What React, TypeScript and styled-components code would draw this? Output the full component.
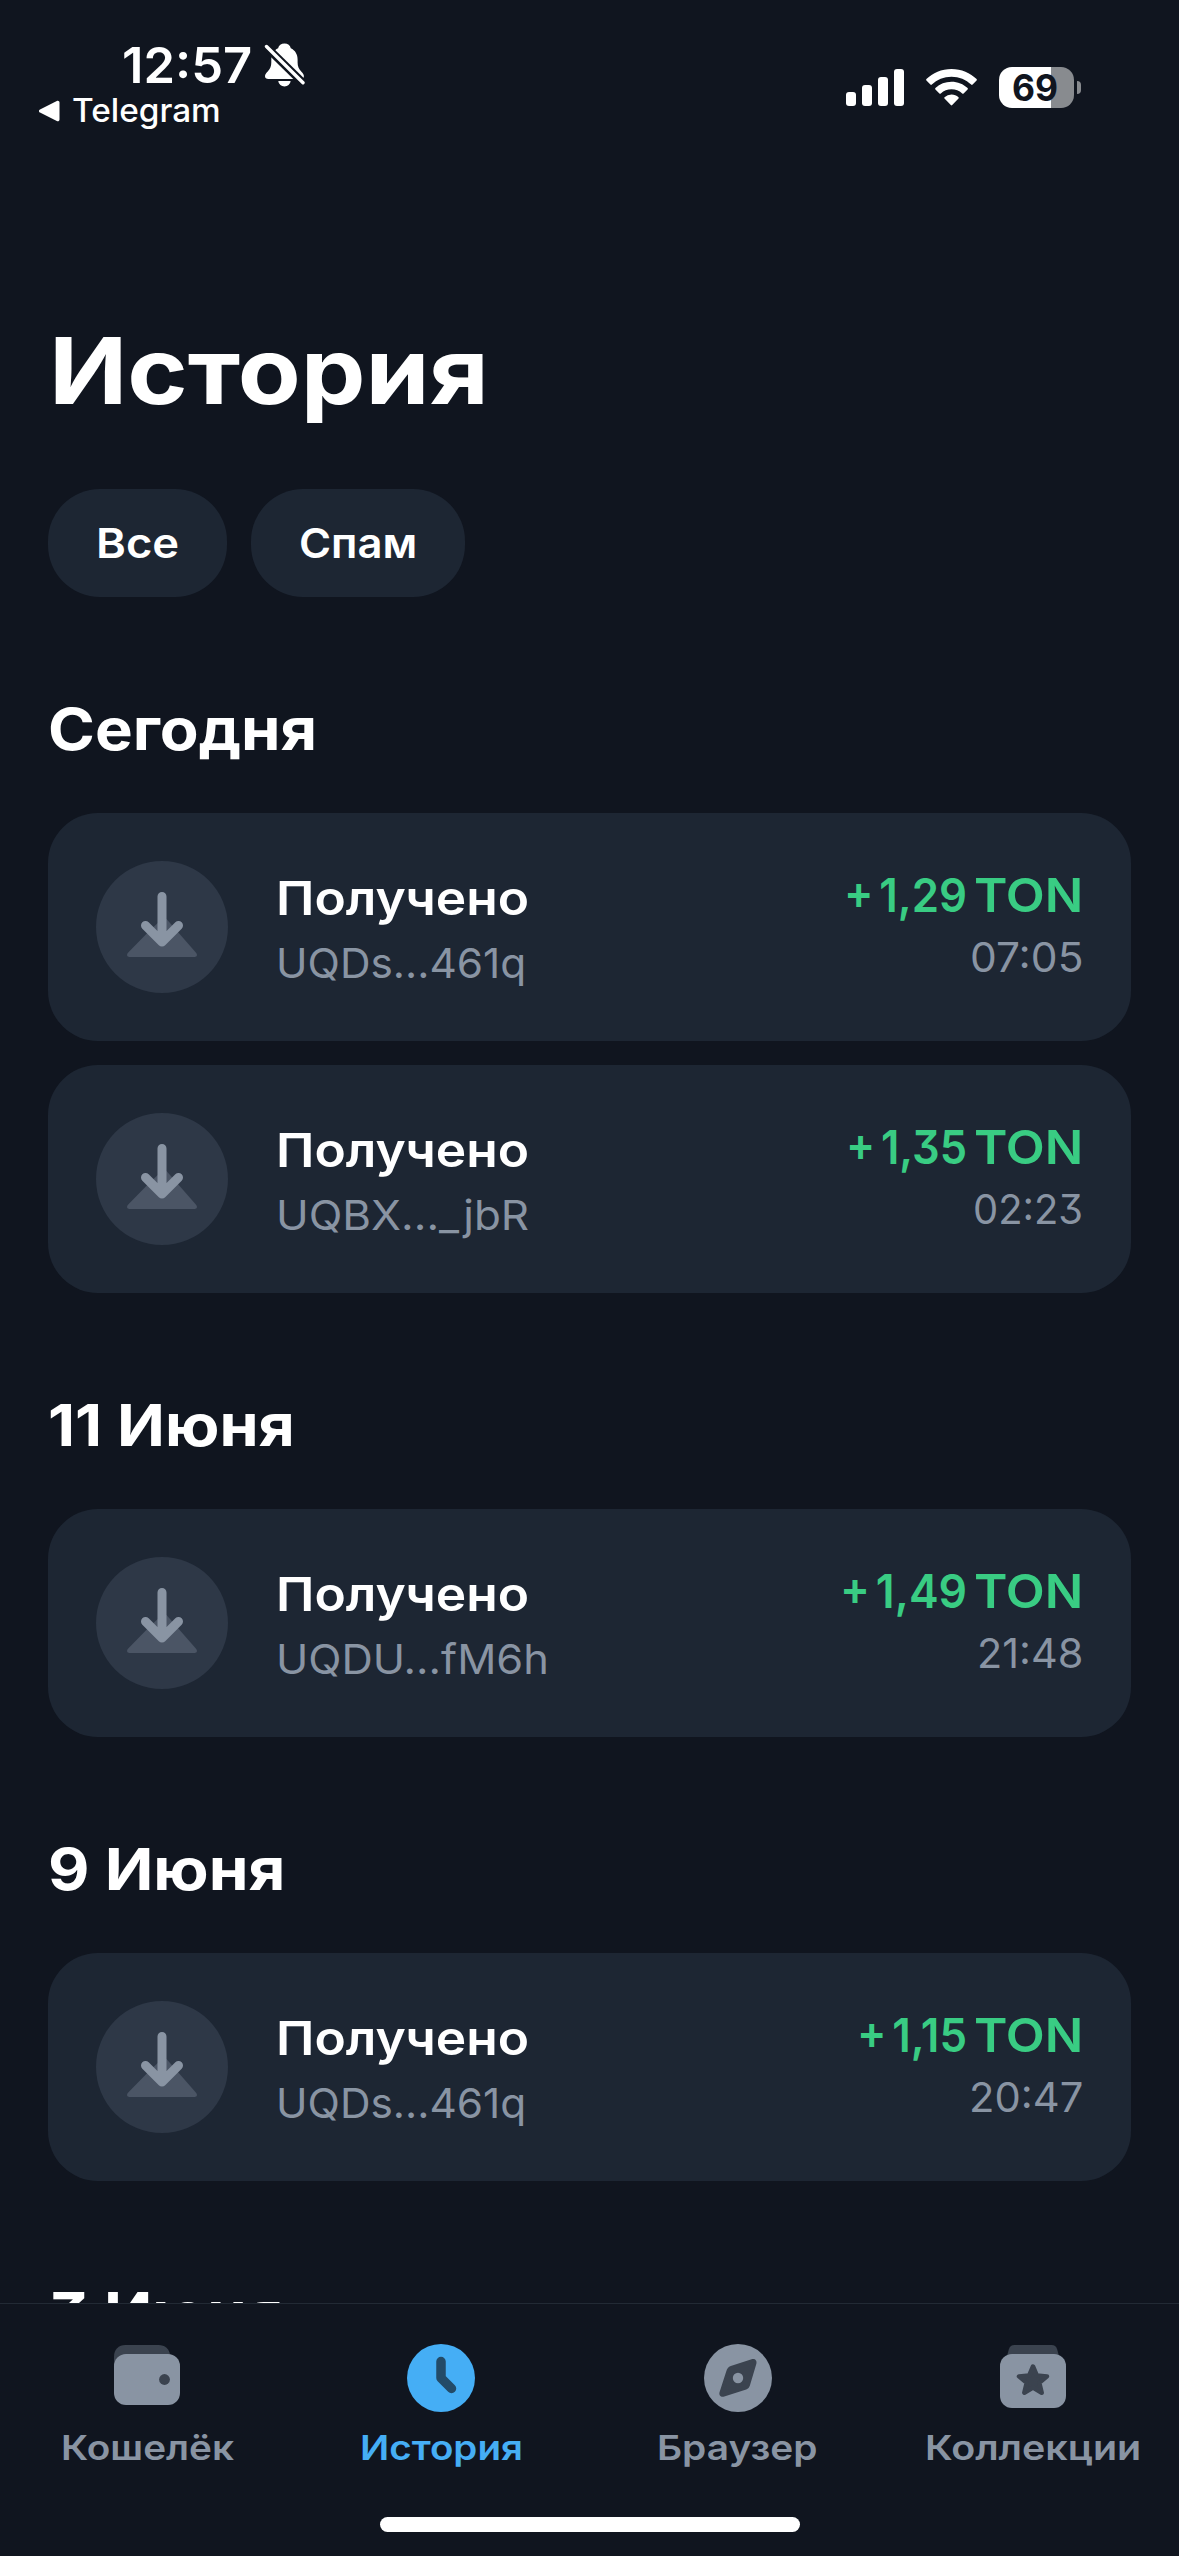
import React, { useLayoutEffect, useRef, useState } from "react";
import styled, { createGlobalStyle } from "styled-components";

const color = {
  page: "#10151f",
  card: "#1d2633",
  tint: "#2e3847",
  text: "#ffffff",
  muted: "#8994a3",
  accent: "#45aef5",
  green: "#39cc83",
  line: "#222a35",
};

const GlobalStyle = createGlobalStyle`
  * { box-sizing: border-box; }
  body {
    margin: 0;
    background: ${color.page};
    color: ${color.text};
    font-family: Inter, "Noto Sans", sans-serif;
    font-feature-settings: "cv09";
  }
`;

/* ---------- text that stretches to a set width ---------- */

const FitBox = styled.span<{ $width: number; $end?: boolean }>`
  display: flex;
  justify-content: ${(p) => (p.$end ? "flex-end" : "flex-start")};
  width: ${(p) => p.$width}px;
  white-space: nowrap;
`;

const FitText = styled.span<{ $end?: boolean }>`
  flex: none;
  transform-origin: ${(p) => (p.$end ? "right" : "left")} center;
`;

function Fit({ width, end, children }: { width: number; end?: boolean; children: string }) {
  const ref = useRef<HTMLSpanElement>(null);
  const [scale, setScale] = useState(1);
  useLayoutEffect(() => {
    if (ref.current) setScale(width / ref.current.offsetWidth);
  }, [width, children]);
  return (
    <FitBox $width={width} $end={end}>
      <FitText ref={ref} $end={end} style={{ transform: `scaleX(${scale})` }}>
        {children}
      </FitText>
    </FitBox>
  );
}

/* ---------- page ---------- */

const Screen = styled.div`
  display: flex;
  flex-direction: column;
  width: 1179px;
  height: 2556px;
  overflow: hidden;
  background: ${color.page};
`;

const StatusBar = styled.header`
  flex: none;
  display: flex;
  justify-content: space-between;
  height: 186px;
  padding: 35px 98px 0 39px;
`;

const StatusLeft = styled.div`
  display: flex;
  flex-direction: column;
`;

const ClockRow = styled.div`
  display: flex;
  align-items: center;
  gap: 12px;
  height: 60px;
  padding-left: 83px;
  font-size: 49.5px;
  font-weight: 600;
  line-height: 60px;
`;

const BackRow = styled.div`
  display: flex;
  align-items: center;
  gap: 12px;
  height: 31px;
  font-size: 32px;
  font-weight: 500;
  line-height: 31px;
`;

const StatusRight = styled.div`
  display: flex;
  align-items: center;
  height: 105px;
`;

const Signal = styled.div`
  display: flex;
  align-items: flex-end;
  gap: 6px;
  height: 37px;
  margin-right: 22px;
`;

const SignalBar = styled.i<{ $height: number }>`
  width: 10px;
  height: ${(p) => p.$height}px;
  border-radius: 3px;
  background: #fff;
`;

const Battery = styled.div`
  display: flex;
  align-items: center;
  justify-content: center;
  width: 75px;
  height: 41px;
  margin: 0 3px 0 22px;
  padding-right: 3px;
  border-radius: 13px;
  background: linear-gradient(90deg, #fff 52px, #888b8f 52px);
  color: ${color.page};
  font-size: 37px;
  font-weight: 700;
  line-height: 41px;
`;

const BatteryCap = styled.i`
  width: 4px;
  height: 13px;
  border-radius: 0 5px 5px 0;
  background: #888b8f;
`;

const Content = styled.main`
  flex: none;
  height: 2117px;
  padding: 124px 48px 0;
  overflow: hidden;
`;

const Title = styled.h1`
  display: flex;
  margin: 0 0 59px 1px;
  font-size: 92.5px;
  font-weight: 700;
  line-height: 120px;
`;

const Chips = styled.nav`
  display: flex;
  gap: 24px;
`;

const Chip = styled.button`
  display: flex;
  height: 108px;
  padding: 0 48px;
  border: 0;
  border-radius: 52px;
  background: ${color.card};
  color: inherit;
  font: 570 41px/108px Inter, "Noto Sans", sans-serif;
`;

const Section = styled.section`
  display: flex;
  flex-direction: column;
  gap: 24px;
  margin-top: 96px;
`;

const Heading = styled.h2`
  display: flex;
  margin: 0 0 24px;
  font-size: 58px;
  font-weight: 700;
  line-height: 72px;
`;

const Card = styled.article`
  display: flex;
  height: 228px;
  padding: 0 48px;
  border-radius: 50px;
  background: ${color.card};
`;

const Badge = styled.div`
  display: flex;
  width: 132px;
  height: 132px;
  margin: 48px 48px 0 0;
  border-radius: 50%;
  background: ${color.tint};
`;

const Details = styled.div`
  display: flex;
  flex: 1;
  flex-direction: column;
  gap: 8px;
  padding-top: 55px;
`;

const Value = styled.div`
  display: flex;
  flex-direction: column;
  align-items: flex-end;
  gap: 5px;
  padding-top: 52px;
`;

const Primary = styled.div<{ $color?: string }>`
  display: flex;
  gap: 7px;
  color: ${(p) => p.$color ?? color.text};
  font-size: 47px;
  font-weight: 580;
  line-height: 60px;
  word-spacing: ${(p) => (p.$color ? "-0.12em" : "normal")};
`;

const Secondary = styled.div`
  color: ${color.muted};
  font-size: 41px;
  font-weight: 430;
  line-height: 55px;
`;

const TabBar = styled.footer`
  display: flex;
  flex: 1;
  flex-direction: column;
  align-items: center;
  border-top: 1px solid ${color.line};
`;

const Tabs = styled.nav`
  display: grid;
  grid-template-columns: 294px 294px 299px 292px;
  width: 100%;
  height: 213px;
  padding-top: 32px;
`;

const Tab = styled.a<{ $active?: boolean }>`
  display: flex;
  flex-direction: column;
  align-items: center;
  gap: 4px;
  color: ${(p) => (p.$active ? color.accent : color.muted)};
  font-size: 34.5px;
  font-weight: 570;
  line-height: 48px;
`;

const HomeIndicator = styled.div`
  width: 420px;
  height: 15px;
  border-radius: 8px;
  background: #fff;
`;

/* ---------- icons ---------- */

const BellOff = () => (
  <svg width="41" height="44" viewBox="0 0 41 44" fill="#fff">
    <path d="M20.500 .6c-3.400 0-5.700 2-6.400 4.600C9.700 7.200 7.300 11.400 7.300 16.400v3.200c0 4-1.200 6.300-3.600 8.800C1.900 30.300 1 31.500 1 33.200 1 35 2.300 36 4.500 36h31.900c2.200 0 3.500-1 3.500-2.800 0-1.700-.9-2.900-2.700-4.800-2.400-2.500-3.600-4.800-3.600-8.800v-3.200c0-5-2.400-9.200-6.800-11.200C26.200 2.600 23.900.6 20.500.6ZM14.300 38h12.300c-.4 3.200-3 5.400-6.100 5.400S14.700 41.200 14.300 38Z" />
    <path d="M2 3.500 40 41" stroke={color.page} strokeWidth="8" />
    <path d="M2.500 3.500 39 39.800" stroke="#fff" strokeWidth="3.400" strokeLinecap="round" />
  </svg>
);

const BackArrow = () => (
  <svg width="21" height="22" viewBox="0 0 21 22" fill="#fff">
    <path d="M1 9.400 17.800.9c1.400-.7 2.700.1 2.700 1.600v17c0 1.500-1.300 2.300-2.700 1.600L1 12.600C-.4 11.900-.4 10.100 1 9.400Z" />
  </svg>
);

const Wifi = () => (
  <svg width="51" height="37" viewBox="0 0 51 37" fill="#fff">
    <path d="M25.500 0C35.400 0 44.400 3.900 50.600 10.100c.4.400.4 1 0 1.400l-4 4.100c-.4.400-1 .4-1.400 0C40.100 10.700 33.100 7.700 25.500 7.700S10.900 10.700 5.800 15.600c-.4.400-1 .4-1.400 0l-4-4.100c-.4-.4-.4-1 0-1.400C6.600 3.900 15.600 0 25.500 0Z" />
    <path d="M25.500 12.700c6.200 0 11.900 2.400 16.100 6.400.4.400.4 1 0 1.400l-4 4c-.4.400-1 .4-1.400 0a15.700 15.700 0 0 0-21.400 0c-.4.400-1 .4-1.400 0l-4-4c-.4-.4-.4-1 0-1.400a23.400 23.400 0 0 1 16.100-6.400Z" />
    <path d="M25.500 25.500c2.700 0 5.100 1 7 2.700.4.400.4 1 0 1.400l-6.300 6.500c-.4.400-1 .4-1.400 0l-6.300-6.500c-.4-.4-.4-1 0-1.400a10.400 10.400 0 0 1 7-2.700Z" />
  </svg>
);

const ReceiveIcon = () => (
  <svg width="132" height="132" viewBox="0 0 132 132" fill="none">
    <path d="M66 58h4.500L100 91.800c1.700 2 1 4.200-1.400 4.200H33.400c-2.400 0-3.100-2.200-1.400-4.200L53 70.300Z" fill="#4b5565" />
    <path d="M66 35.500V79M49.500 64.500 66 81l16.500-16.500" stroke={color.muted} strokeWidth="9" strokeLinecap="round" strokeLinejoin="round" />
  </svg>
);

const WalletIcon = () => (
  <svg width="84" height="84" viewBox="0 0 84 84">
    <path d="M9 30V20.500C9 13.600 13.600 9 20.500 9h33C60 9 64.500 13 65 19v11Z" fill="#3b434f" />
    <rect x="9" y="18" width="66" height="51" rx="12" fill="currentColor" />
    <circle cx="59.500" cy="43.500" r="5.400" fill="#3b434f" />
  </svg>
);

const HistoryIcon = () => (
  <svg width="84" height="84" viewBox="0 0 84 84" fill="none">
    <circle cx="42" cy="42" r="34" fill="currentColor" />
    <path d="M42 25.500V42l10.500 10.500" stroke="#234b68" strokeWidth="9.500" strokeLinecap="round" strokeLinejoin="round" />
  </svg>
);

const BrowserIcon = () => (
  <svg width="84" height="84" viewBox="0 0 84 84">
    <circle cx="42" cy="42" r="34" fill="currentColor" />
    <path d="M34.800 29.900 55.600 23.300c3.300-1 5.700 1.300 4.700 4.700L53.900 49.600c-.6 2-1.700 3.300-3.700 4L28.300 60.600c-3.300 1.100-5.700-1.300-4.700-4.600l6.700-20.800c.8-2.600 2-4.400 4.500-5.300Z" fill="#3b434f" />
    <circle cx="42" cy="42" r="5.200" fill="currentColor" />
  </svg>
);

const CollectiblesIcon = () => (
  <svg width="84" height="84" viewBox="0 0 84 84">
    <path d="M16 20l1.800-6.600C18.700 10.500 20.500 9 23.500 9h37c3 0 4.800 1.500 5.700 4.400L68 20Z" fill="#3b434f" />
    <rect x="9" y="18" width="66" height="54" rx="12" fill="currentColor" />
    <path d="m42 30.500 3.800 9 10.200.9-7.700 6.500 2.400 9.800-8.700-5.200-8.700 5.200 2.400-9.800-7.700-6.500 10.200-.9Z" fill="#3b434f" stroke="#3b434f" strokeWidth="4.500" strokeLinejoin="round" />
  </svg>
);

/* ---------- data ---------- */

type Item = { address: string; addressWidth: number; amount: string; amountWidth: number; time: string; timeWidth: number };
type Group = { title: string; width: number; items: Item[] };

const groups: Group[] = [
  {
    title: "Сегодня",
    width: 269,
    items: [
      { address: "UQDs...461q", addressWidth: 250, amount: "+ 1,29", amountWidth: 123, time: "07:05", timeWidth: 114 },
      { address: "UQBX..._jbR", addressWidth: 253, amount: "+ 1,35", amountWidth: 121, time: "02:23", timeWidth: 110 },
    ],
  },
  {
    title: "11 Июня",
    width: 247,
    items: [{ address: "UQDU...fM6h", addressWidth: 273, amount: "+ 1,49", amountWidth: 127, time: "21:48", timeWidth: 106 }],
  },
  {
    title: "9 Июня",
    width: 238,
    items: [{ address: "UQDs...461q", addressWidth: 250, amount: "+ 1,15", amountWidth: 110, time: "20:47", timeWidth: 114 }],
  },
  { title: "3 Июня", width: 235, items: [] },
];

const tabs = [
  { label: "Кошелёк", width: 173, Icon: WalletIcon },
  { label: "История", width: 163, Icon: HistoryIcon, active: true },
  { label: "Браузер", width: 161, Icon: BrowserIcon },
  { label: "Коллекции", width: 216, Icon: CollectiblesIcon },
];

const Transaction = ({ item }: { item: Item }) => (
  <Card>
    <Badge>
      <ReceiveIcon />
    </Badge>
    <Details>
      <Primary><Fit width={253}>Получено</Fit></Primary>
      <Secondary><Fit width={item.addressWidth}>{item.address}</Fit></Secondary>
    </Details>
    <Value>
      <Primary $color={color.green}>
        <Fit width={item.amountWidth} end>{item.amount}</Fit>
        <Fit width={109} end>TON</Fit>
      </Primary>
      <Secondary><Fit width={item.timeWidth} end>{item.time}</Fit></Secondary>
    </Value>
  </Card>
);

export default function App() {
  return (
    <>
      <GlobalStyle />
      <Screen>
        <StatusBar>
          <StatusLeft>
            <ClockRow>
              <Fit width={130}>12:57</Fit>
              <BellOff />
            </ClockRow>
            <BackRow>
              <BackArrow />
              <Fit width={149}>Telegram</Fit>
            </BackRow>
          </StatusLeft>
          <StatusRight>
            <Signal>
              {[14, 21, 29, 37].map((h) => (
                <SignalBar key={h} $height={h} />
              ))}
            </Signal>
            <Wifi />
            <Battery><Fit width={46}>69</Fit></Battery>
            <BatteryCap />
          </StatusRight>
        </StatusBar>
        <Content>
          <Title><Fit width={440}>История</Fit></Title>
          <Chips>
            <Chip><Fit width={83}>Все</Fit></Chip>
            <Chip><Fit width={118}>Спам</Fit></Chip>
          </Chips>
          {groups.map((group) => (
            <Section key={group.title}>
              <Heading><Fit width={group.width}>{group.title}</Fit></Heading>
              {group.items.map((item) => (
                <Transaction key={item.amount} item={item} />
              ))}
            </Section>
          ))}
        </Content>
        <TabBar>
          <Tabs>
            {tabs.map(({ label, width, Icon, active }) => (
              <Tab key={label} $active={active}>
                <Icon />
                <Fit width={width}>{label}</Fit>
              </Tab>
            ))}
          </Tabs>
          <HomeIndicator />
        </TabBar>
      </Screen>
    </>
  );
}
